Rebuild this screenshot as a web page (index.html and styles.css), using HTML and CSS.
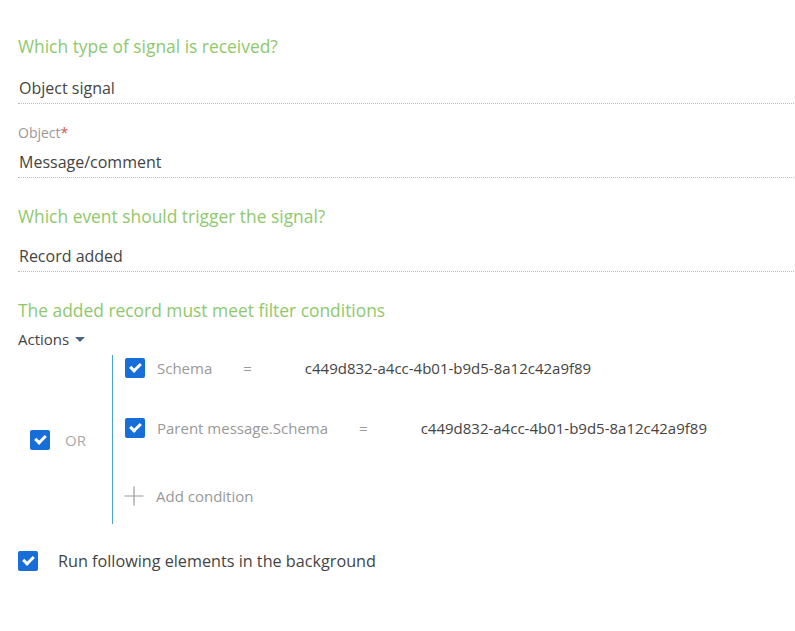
FILE: index.html
```html
<!DOCTYPE html>
<html lang="en">

<head>
    <meta charset="UTF-8">
    <meta name="viewport" content="width=device-width, initial-scale=1.0">
    <title>Signal settings</title>
    <link rel="stylesheet" href="styles.css">
</head>

<body>
    <div class="container">
        <div class="title">Which type of signal is received?</div>
        <div class="field first">
            <div class="value">Object signal</div>
        </div>
        <div class="label">Object<span class="required">*</span></div>
        <div class="field labelled">
            <div class="value">Message/comment</div>
        </div>

        <div class="title">Which event should trigger the signal?</div>
        <div class="field first event">
            <div class="value">Record added</div>
        </div>

        <div class="title">The added record must meet filter conditions</div>
        <div class="actions">Actions <span class="caret"></span></div>

        <div class="filter-group">
            <div class="group-head">
                <span class="check"></span>
                <span class="logic">OR</span>
            </div>
            <div class="conditions">
                <div class="cond">
                    <span class="check"></span>
                    <span class="col-name">Schema</span>
                    <span class="op">=</span>
                    <span class="col-value">c449d832-a4cc-4b01-b9d5-8a12c42a9f89</span>
                </div>
                <div class="cond">
                    <span class="check"></span>
                    <span class="col-name">Parent message.Schema</span>
                    <span class="op">=</span>
                    <span class="col-value">c449d832-a4cc-4b01-b9d5-8a12c42a9f89</span>
                </div>
                <div class="cond add-cond">
                    <svg class="plus" width="20" height="20" viewBox="0 0 20 20">
                        <path d="M10 0.5V19.5M0.5 10H19.5" stroke="#9a9a9a" stroke-width="1.2" fill="none" />
                    </svg>
                    <span class="add-text">Add condition</span>
                </div>
            </div>
        </div>

        <div class="background-row">
            <span class="check"></span>
            <span class="bg-text">Run following elements in the background</span>
        </div>
    </div>
</body>

</html>
```

FILE: styles.css
```css
body {
    margin: 0;
    background-color: white;
    font-family: 'Open Sans', 'Liberation Sans', sans-serif;
    color: #444;
}

.container {
    padding: 0 1px 40px 18px;
}

.title {
    font-size: 17.4px;
    line-height: 24px;
    color: #8ec96d;
    margin-top: 26px;
}

.container > .title:first-child {
    margin-top: 34px;
}

.field {
    border-bottom: 1px dotted #bdbdbd;
    padding-bottom: 3px;
}

.field.first {
    margin-top: 18px;
}

.field.event {
    margin-top: 16px;
}

.field.labelled {
    margin-top: 7px;
}

.value {
    font-size: 16px;
    line-height: 24px;
    padding-left: 1px;
}

.label {
    margin-top: 19px;
    font-size: 14px;
    line-height: 20px;
    color: #999;
}

.required {
    color: #e0544f;
}

.actions {
    margin-top: 7px;
    font-size: 15px;
    line-height: 20px;
    display: flex;
    align-items: center;
    gap: 6px;
}

.caret {
    width: 0;
    height: 0;
    border-left: 5px solid transparent;
    border-right: 5px solid transparent;
    border-top: 5px solid #4d6384;
    margin-top: 1px;
}

.check {
    display: inline-block;
    flex: none;
    width: 20px;
    height: 20px;
    border-radius: 2px;
    background-color: #176ed9;
    position: relative;
}

.check::after {
    content: "";
    position: absolute;
    left: 5px;
    top: 5px;
    width: 8px;
    height: 4px;
    border-left: 3px solid white;
    border-bottom: 3px solid white;
    transform: rotate(-45deg);
}

.filter-group {
    margin-top: 6px;
    display: flex;
    align-items: center;
}

.group-head {
    width: 94px;
    padding-left: 12px;
    box-sizing: border-box;
    display: flex;
    align-items: center;
    gap: 15px;
}

.logic {
    font-size: 15px;
    color: #aaa;
}

.conditions {
    border-left: 1px solid #4aa3d6;
    padding: 0 0 15px 12px;
}

.cond {
    height: 26px;
    display: flex;
    align-items: center;
    font-size: 15px;
}

.cond + .cond {
    margin-top: 34px;
}

.cond + .add-cond {
    margin-top: 42px;
}

.col-name {
    margin-left: 12px;
    color: #999;
}

.op {
    margin-left: 31px;
    color: #999;
}

.col-value {
    margin-left: 53px;
    font-size: 15px;
    color: #444;
}

.plus {
    margin-left: -1px;
}

.add-text {
    margin-left: 12px;
    color: #999;
}

.background-row {
    margin-top: 26px;
    display: flex;
    align-items: center;
    gap: 20px;
}

.bg-text {
    font-size: 16.2px;
}
```
